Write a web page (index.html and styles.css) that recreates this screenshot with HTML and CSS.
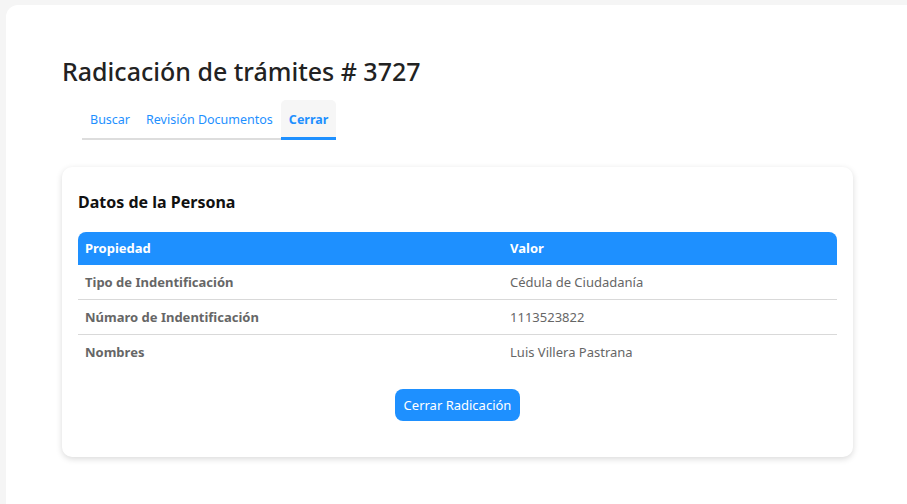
FILE: index.html
```html
<!DOCTYPE html>
<html lang="es">
<head>
    <meta charset="UTF-8">
    <title>Radicación de trámites</title>
    <link rel="stylesheet" href="styles.css">
</head>
<body>
    <div class="page">
        <h1>Radicación de trámites # 3727</h1>
        <nav class="tabs">
            <a href="#">Buscar</a>
            <a href="#">Revisión Documentos</a>
            <a href="#" class="active">Cerrar</a>
        </nav>

        <div class="card">
            <h2>Datos de la Persona</h2>
            <table>
                <thead>
                    <tr>
                        <th class="prop">Propiedad</th>
                        <th>Valor</th>
                    </tr>
                </thead>
                <tbody>
                    <tr>
                        <td class="prop">Tipo de Indentificación</td>
                        <td>Cédula de Ciudadanía</td>
                    </tr>
                    <tr>
                        <td class="prop">Númaro de Indentificación</td>
                        <td>1113523822</td>
                    </tr>
                    <tr>
                        <td class="prop">Nombres</td>
                        <td>Luis Villera Pastrana</td>
                    </tr>
                </tbody>
            </table>
            <div class="actions">
                <button type="button">Cerrar Radicación</button>
            </div>
        </div>
    </div>
</body>
</html>
```

FILE: styles.css
```css
body {
    margin: 0;
    padding: 5px 0 0 6px;
    background-color: #f5f5f5;
    font-family: "Noto Sans", Arial, sans-serif;
    color: #222;
    overflow: hidden;
}
.page {
    background: white;
    border-radius: 12px 0 0 0;
    min-height: 520px;
    padding: 48px 54px 40px 56px;
}
h1 {
    margin: 0 0 11px;
    font-size: 25px;
    font-weight: 500;
    line-height: 36px;
    color: #222;
}
.tabs {
    display: flex;
    width: fit-content;
    margin-left: 20px;
    border-bottom: 2px solid #ddd;
}
.tabs a {
    padding: 11px 8px 8px;
    font-size: 12.5px;
    line-height: 18px;
    white-space: nowrap;
    color: #1e90ff;
    text-decoration: none;
    border-bottom: 3px solid transparent;
    margin-bottom: -2px;
    border-radius: 5px 5px 0 0;
}
.tabs a.active {
    background-color: #f6f6f6;
    border-bottom-color: #1e90ff;
    font-weight: bold;
}
.card {
    margin-top: 27px;
    width: 759px;
    padding: 16px 16px 36px;
    background: white;
    border-radius: 10px;
    box-shadow: 0 2px 6px rgba(0, 0, 0, 0.15);
}
h2 {
    margin: 8px 0 19px;
    font-size: 16px;
    line-height: 22px;
    color: #111;
}
table {
    width: 100%;
    border-collapse: collapse;
    font-size: 13px;
}
th {
    background-color: #1e90ff;
    color: white;
    text-align: left;
    padding: 7px 7px;
    line-height: 19px;
}
th:first-child {
    border-top-left-radius: 8px;
}
th:last-child {
    border-top-right-radius: 8px;
}
td {
    padding: 8px 7px;
    line-height: 18px;
    color: #666;
    border-bottom: 1px solid #d9d9d9;
}
tbody tr:last-child td {
    border-bottom: none;
}
.prop {
    width: 56%;
}
td.prop {
    font-weight: bold;
}
.actions {
    text-align: center;
    margin-top: 20px;
}
button {
    background-color: #1e90ff;
    color: white;
    border: none;
    border-radius: 8px;
    padding: 7px 9px;
    font-family: inherit;
    font-size: 13px;
    line-height: 18px;
    cursor: pointer;
}
```
